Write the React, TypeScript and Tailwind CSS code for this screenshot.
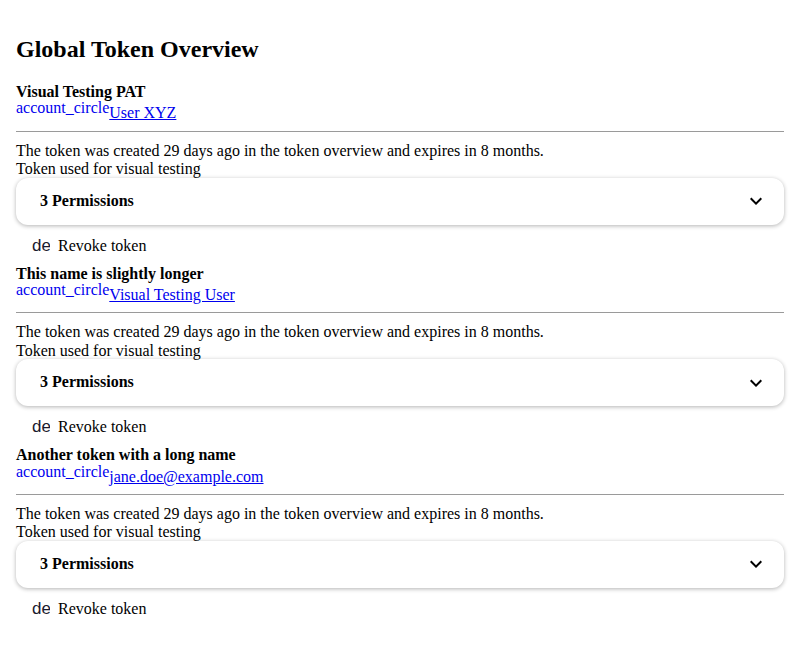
import React from 'react';

interface Token {
  id: number;
  name: string;
  owner: string;
}

const tokens: Token[] = [
  { id: 1, name: 'Visual Testing PAT', owner: 'User XYZ' },
  { id: 2, name: 'This name is slightly longer', owner: 'Visual Testing User' },
  { id: 3, name: 'Another token with a long name', owner: 'jane.doe@example.com' },
];

const ExpandMore: React.FC = () => (
  <svg width="24" height="24" viewBox="0 0 24 24" fill="currentColor" aria-hidden="true">
    <path d="M16.59 8.59 12 13.17 7.41 8.59 6 10l6 6 6-6z" />
  </svg>
);

const TokenCard: React.FC<{ token: Token }> = ({ token }) => {
  return (
    <div>
      <div className="font-bold">{token.name}</div>
      <div className="flex items-start text-[#0000ee]">
        <span className="-mt-[2px]">account_circle</span>
        <a href="#" className="underline mt-[3px]">{token.owner}</a>
      </div>
      <hr className="mt-2 mb-[10px] border-t border-[#9a9a9a]" />
      <div>The token was created 29 days ago in the token overview and expires in 8 months.</div>
      <div>Token used for visual testing</div>
      <div className="-mt-[1px] bg-white rounded-xl shadow-[0_1px_4px_rgba(0,0,0,0.3)]">
        <div className="h-[47px] flex items-center justify-between pl-6 pr-4">
          <span className="font-bold">3 Permissions</span>
          <ExpandMore />
        </div>
      </div>
      <button className="flex items-baseline gap-2 pl-4 pt-[9px] pb-[8px]">
        <span className="w-[18px] overflow-hidden whitespace-nowrap text-[17px] leading-[23px] text-[#1a1a2e] font-['Liberation_Sans',sans-serif]">
          delete
        </span>
        <span>Revoke token</span>
      </button>
    </div>
  );
};

const App: React.FC = () => {
  return (
    <div className="p-4 font-['Liberation_Serif',serif] text-base leading-[1.15] text-black bg-white min-h-[645px]">
      <h2 className="text-2xl font-bold mt-[17px] mb-[18px]">Global Token Overview</h2>
      {tokens.map(token => (
        <TokenCard key={token.id} token={token} />
      ))}
    </div>
  );
};

export default App;
